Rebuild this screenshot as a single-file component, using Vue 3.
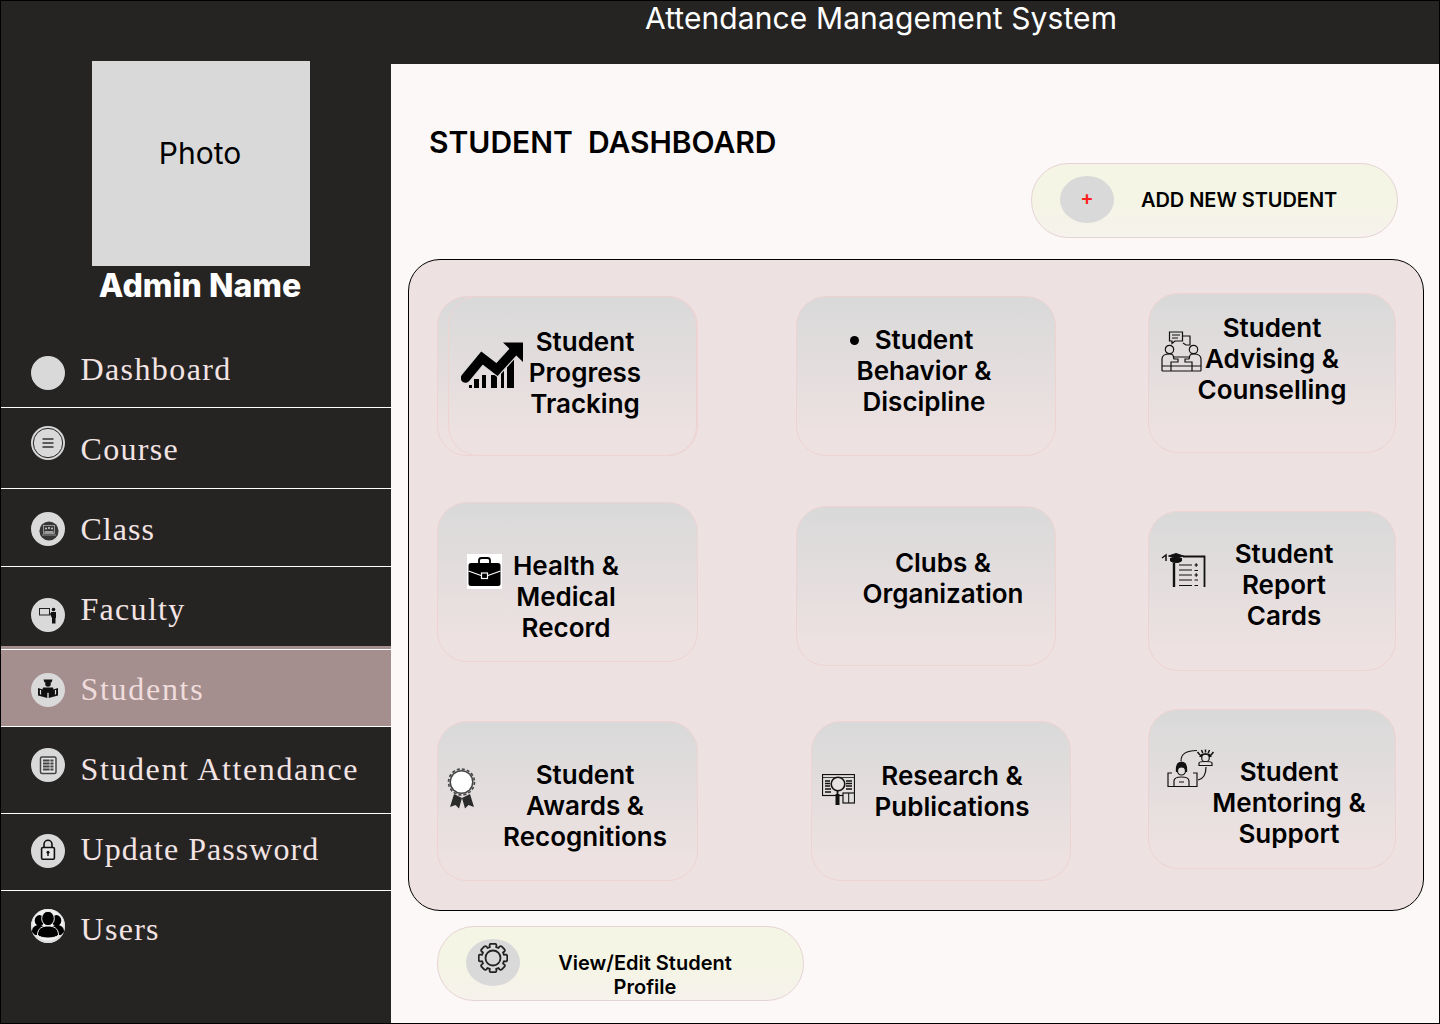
<script setup>
const navItems = [
  { key: 'dashboard', label: 'Dashboard' },
  { key: 'course', label: 'Course' },
  { key: 'class', label: 'Class' },
  { key: 'faculty', label: 'Faculty' },
  { key: 'students', label: 'Students' },
  { key: 'attendance', label: 'Student Attendance' },
  { key: 'password', label: 'Update Password' },
  { key: 'users', label: 'Users' }
]

const columns = [
  [
    { key: 'progress', lines: ['Student', 'Progress', 'Tracking'] },
    { key: 'health', lines: ['Health &', 'Medical', 'Record'] },
    { key: 'awards', lines: ['Student', 'Awards &', 'Recognitions'] }
  ],
  [
    { key: 'behavior', lines: ['Student', 'Behavior &', 'Discipline'] },
    { key: 'clubs', lines: ['Clubs &', 'Organization'] },
    { key: 'research', lines: ['Research &', 'Publications'] }
  ],
  [
    { key: 'advising', lines: ['Student', 'Advising &', 'Counselling'] },
    { key: 'report', lines: ['Student', 'Report', 'Cards'] },
    { key: 'mentoring', lines: ['Student', 'Mentoring &', 'Support'] }
  ]
]

const pageTitle = 'STUDENT  DASHBOARD'

// 8 teeth gear outline, centre 15,15
function makeGear() {
  let d = ''
  const teeth = 8
  for (let i = 0; i < teeth; i++) {
    const a = (i / teeth) * Math.PI * 2
    const step = Math.PI / teeth
    const pt = (r, ang) => `${(15 + r * Math.cos(ang)).toFixed(2)} ${(15 + r * Math.sin(ang)).toFixed(2)}`
    d += `${i === 0 ? 'M' : 'L'}${pt(11.4, a - step * 0.72)} `
    d += `C${pt(13.4, a - step * 0.72)} ${pt(14.4, a - step * 0.6)} ${pt(14.4, a - step * 0.36)} `
    d += `L${pt(14.4, a + step * 0.36)} `
    d += `C${pt(14.4, a + step * 0.6)} ${pt(13.4, a + step * 0.72)} ${pt(11.4, a + step * 0.72)} `
  }
  return d + 'Z'
}
const gearPath = makeGear()
</script>

<template>
  <div class="frame">
    <aside class="sidebar">
      <div class="photo">Photo</div>
      <div class="admin-name">Admin Name</div>
      <nav class="nav">
        <div v-for="item in navItems" :key="item.key" :class="['nav-row', 'nav-' + item.key]">
          <svg class="nav-icon" width="34" height="34" viewBox="0 0 34 34">
            <circle cx="17" cy="17" r="17" fill="#d9d9d9" />
            <template v-if="item.key === 'course'">
              <circle cx="17" cy="17" r="14.7" fill="none" stroke="#222" stroke-width="1" />
              <path d="M11.5 13H22.5M11.5 17H22.5M11.5 21H22.5" stroke="#333" stroke-width="1.300" />
            </template>
            <template v-if="item.key === 'class'">
              <circle cx="18" cy="19" r="9.6" fill="#363636" />
              <rect x="12.5" y="13.5" width="11" height="8" fill="none" stroke="#bbb" stroke-width="0.7" />
              <circle cx="15" cy="16.5" r="1" fill="#ccc" />
              <circle cx="18" cy="16" r="1" fill="#ccc" />
              <circle cx="21" cy="16.5" r="1" fill="#ccc" />
              <path d="M13.5 20H22.5" stroke="#ccc" stroke-width="1.4" />
              <path d="M11 23H25" stroke="#aaa" stroke-width="0.8" />
            </template>
            <template v-if="item.key === 'faculty'">
              <rect x="8.500" y="10.500" width="10" height="6.500" fill="#d9d9d9" stroke="#222" stroke-width="1" />
              <path d="M18 15L21 17" stroke="#222" stroke-width="1.200" />
              <circle cx="22.500" cy="11.500" r="1.800" fill="#111" />
              <path d="M20 14H25V20H24.500V25.500H21V20L19.500 17Z" fill="#111" />
            </template>
            <template v-if="item.key === 'students'">
              <path d="M12.500 6.500H21.500L20.500 9.500H13.500Z" fill="#111" />
              <circle cx="17" cy="11" r="2.800" fill="#111" />
              <path d="M12 14.500H22L23 18L17 20L11 18Z" fill="#111" />
              <path d="M7 15L16.300 18V25L7 22.500ZM27 15L17.700 18V25L27 22.500Z" fill="#111" />
              <path d="M9.500 17V21.500M24.500 17V21.500" stroke="#d9d9d9" stroke-width="1.200" />
            </template>
            <template v-if="item.key === 'attendance'">
              <rect x="9.500" y="9" width="15.500" height="16.500" rx="1.500" fill="#e2e2e2" stroke="#444" stroke-width="1.500" />
              <path d="M12 12.500H22.500M12 15.500H22.500M12 18.500H22.500M12 21.500H22.500" stroke="#444" stroke-width="1.900" />
              <path d="M19 11V23.500" stroke="#e2e2e2" stroke-width="0.800" />
            </template>
            <template v-if="item.key === 'password'">
              <path d="M13 14V10.500C13 8 14.800 6.300 17 6.300S21 8 21 10.500V14" fill="none" stroke="#111" stroke-width="1.600" />
              <rect x="10.600" y="13.500" width="12.800" height="11.700" rx="1.200" fill="#e6e6e6" stroke="#111" stroke-width="1.600" />
              <circle cx="17" cy="18.200" r="1.500" fill="#111" />
              <path d="M16.300 18.500H17.700V22H16.300Z" fill="#111" />
            </template>
            <template v-if="item.key === 'users'">
              <circle cx="17" cy="17" r="17" fill="#dedede" />
              <circle cx="17" cy="16" r="15.500" fill="#f2f2f2" />
              <ellipse cx="8.500" cy="11.500" rx="4.800" ry="5.400" fill="#000" />
              <ellipse cx="25.500" cy="11.500" rx="4.800" ry="5.400" fill="#000" />
              <path d="M1 23C1 18 4 16 8 16S15 18 15 23L12 26H4Z" fill="#000" />
              <path d="M33 23C33 18 30 16 26 16S19 18 19 23L22 26H30Z" fill="#000" />
              <ellipse cx="17" cy="9.500" rx="6.300" ry="7.200" fill="#000" stroke="#f2f2f2" stroke-width="1" />
              <path d="M6.500 26C6.500 19.500 11 17 17 17S27.500 19.500 27.500 26C24 30 10 30 6.500 26Z" fill="#000" stroke="#f2f2f2" stroke-width="1" />
            </template>
          </svg>
          <span class="nav-label">{{ item.label }}</span>
        </div>
      </nav>
    </aside>

    <div class="content">
      <header class="topbar">Attendance Management System</header>
      <main class="main">
        <h1 class="page-title">{{ pageTitle }}</h1>

        <div class="pill add-btn">
          <span class="pill-icon"><span class="plus">+</span></span>
          <span class="add-text">ADD NEW STUDENT</span>
        </div>

        <section class="panel">
          <div v-for="(col, i) in columns" :key="i" :class="['col', 'col-' + (i + 1)]">
            <div v-for="card in col" :key="card.key" :class="['card', 'card-' + card.key]">
              <span v-if="card.key === 'progress'" class="ghost"></span>

              <svg v-if="card.key === 'progress'" class="card-icon" width="62" height="47" viewBox="0 0 62 47">
                <path d="M8 43H11V46H8ZM13 37H18V46H13ZM21 33H25V46H21ZM30 33H36V46H30ZM40 25H43V46H40ZM46 18H53V46H46Z" fill="#000" />
                <path d="M4.500 36L21 16L36 27.500L52 10" fill="none" stroke="#dcdada" stroke-width="12" />
                <path d="M4.500 36L21 16L36 27.500L52 10" fill="none" stroke="#000" stroke-width="9.500" stroke-linecap="round" />
                <path d="M42 0.500H62V20Z" fill="#000" />
              </svg>

              <svg v-if="card.key === 'health'" class="card-icon" width="35" height="35" viewBox="0 0 35 35">
                <rect width="35" height="35" fill="#fff" />
                <path d="M12 9V6.500C12 5 13 4 14.500 4H20.500C22 4 23 5 23 6.500V9" fill="none" stroke="#000" stroke-width="1.800" />
                <rect x="1.500" y="9" width="32" height="23" rx="2.500" fill="#000" />
                <path d="M1.500 17L14 21.500M33.500 17L21 21.500" stroke="#fff" stroke-width="1.200" />
                <rect x="14.500" y="19" width="6" height="5.500" fill="#000" stroke="#fff" stroke-width="1.200" />
              </svg>

              <svg v-if="card.key === 'awards'" class="card-icon" width="30" height="41" viewBox="0 0 30 41">
                <path d="M7 26L3 39L8.500 37L12 40.500L15 30ZM23 26L27 39L21.500 37L18 40.500L15 30Z" fill="#2b2b2b" />
                <circle cx="14.500" cy="14" r="13" fill="none" stroke="#444" stroke-width="1.600" stroke-dasharray="3 2.100" />
                <circle cx="14.500" cy="14" r="12" fill="#444" />
                <circle cx="14.500" cy="14" r="10.500" fill="#fff" />
              </svg>

              <svg v-if="card.key === 'research'" class="card-icon" width="33" height="34" viewBox="0 0 33 34" fill="none" stroke="#111">
                <rect x="0.500" y="0.500" width="32" height="21" stroke-width="1.200" />
                <path d="M1 3.500H32" stroke-width="0.800" />
                <path d="M3 7H8M3 9.500H8M3 12H8M3 15H9M3 18H9M24 7H30M24 9.500H30M24 12H30M24 15H30" stroke-width="1.500" />
                <circle cx="16" cy="10" r="6.800" fill="#e6e2e2" stroke-width="1.600" />
                <path d="M15.500 17V20" stroke-width="1.800" />
                <path d="M15.500 20V31" stroke-width="4" />
                <rect x="21" y="19" width="11.500" height="10" fill="#e2dede" stroke-width="1.200" />
                <path d="M26.700 19V29" />
              </svg>

              <svg v-if="card.key === 'advising'" class="card-icon" width="41" height="41" viewBox="0 0 41 41" fill="none" stroke="#111" stroke-width="1.200">
                <path d="M21 5H29V14H25L22 12" />
                <path d="M8.500 1H21.500V10H14L11 12.500V10H8.500Z" fill="#ded9d9" />
                <path d="M11 4H19M11 7H17" />
                <circle cx="8.500" cy="18.500" r="4.200" />
                <circle cx="32.500" cy="18.500" r="4.200" />
                <path d="M1 40V28C1 24.500 4 23 8.500 23S12 25 13 28H17V31H10V40" />
                <path d="M40 40V28C40 24.500 37 23 32.500 23S29 25 28 28H24V31H31V40" />
                <path d="M12 26H29M1 35H40M1 40H40" />
              </svg>

              <svg v-if="card.key === 'report'" class="card-icon" width="45" height="36" viewBox="0 0 45 36" fill="none" stroke="#111">
                <path d="M1 5L5 2V8" stroke-width="1.500" />
                <path d="M7.500 3L15 0.500L22.500 3L15 5.500Z" fill="#111" />
                <path d="M9.500 5V8C12 10 18 10 20.500 8V5" fill="#111" />
                <path d="M22 3.500H43.500V34" stroke-width="1.800" />
                <path d="M13 10V34" stroke-width="2.400" />
                <path d="M18 12H31M18 17H31M18 22H31M18 27H31M18 32.500H31" stroke-width="1.200" />
                <path d="M33.500 12H37M35.200 10.300V13.700M33.500 17.500H37M33.500 22H37M35.200 20.300V23.700M33.500 27H37M33.500 32.500H37" stroke-width="1.200" />
              </svg>

              <svg v-if="card.key === 'mentoring'" class="card-icon" width="48" height="38" viewBox="0 0 48 38" fill="none" stroke="#111" stroke-width="1.200">
                <path d="M14 12C14 5 19 1.500 30 1.500M39 18C39 26 36 30 31 31" />
                <path d="M5 24H1V37.500H30V24H26" />
                <path d="M9.500 23C9 16 11 13 14.500 13S20 16 19.500 23" fill="#111" />
                <circle cx="14.500" cy="22" r="4" fill="#e3dfdf" />
                <path d="M7 37.500V32C7 29.500 10 28 14.500 28S22 29.500 22 32V37.500M12 33H17" />
                <path d="M30.500 3L33 6M46.500 3L44 6M34.500 1L35.800 4M42.500 1L41.200 4M38.500 0.500V3.500" stroke-width="1.500" />
                <path d="M33 7.500C33 4 44 4 44 7.500Z" fill="#111" />
                <circle cx="38.500" cy="9" r="3.800" fill="#e3dfdf" />
                <path d="M32 16.500V14C32 13 34.500 12.500 38.500 12.500S45 13 45 14V16.500Z" fill="#e3dfdf" />
              </svg>

              <div class="card-text">
                <div v-for="(line, n) in card.lines" :key="n">
                  <span v-if="card.key === 'behavior' && n === 0" class="bullet"></span>{{ line }}
                </div>
              </div>
            </div>
          </div>
        </section>

        <div class="pill view-btn">
          <span class="pill-icon">
            <svg class="gear" width="30" height="30" viewBox="0 0 30 30" fill="none" stroke="#222" stroke-width="1.800">
              <path :d="gearPath" stroke-linejoin="round" />
              <circle cx="15" cy="15" r="7.500" />
            </svg>
          </span>
          <span class="view-text">View/Edit Student<br />Profile</span>
        </div>
      </main>
    </div>
  </div>
</template>

<style scoped>
.frame {
  display: flex;
  width: 1440px;
  height: 1024px;
  box-sizing: border-box;
  border: 1px solid #000;
  background: #252423;
  font-family: Inter, "Liberation Sans", sans-serif;
  color: #000;
  overflow: hidden;
}

.sidebar {
  width: 390px;
  flex: none;
  padding-top: 60px;
}

.photo {
  display: flex;
  justify-content: center;
  width: 218px;
  height: 205px;
  margin-left: 91px;
  padding: 72px 2px 0 0;
  box-sizing: border-box;
  background: #d9d9d9;
  font-size: 30px;
  line-height: 40px;
  font-weight: 400;
}

.admin-name {
  height: 40px;
  padding-left: 8px;
  text-align: center;
  color: #fff;
  font-size: 32px;
  font-weight: 800;
  line-height: 40px;
}

.nav-row {
  display: flex;
  align-items: flex-start;
  box-sizing: border-box;
  padding-left: 30px;
  border-bottom: 1px solid #fff;
}

.nav-icon {
  flex: none;
}

.nav-label {
  margin-left: 16px;
  font-family: "Liberation Serif", serif;
  font-size: 32px;
  line-height: 38px;
  letter-spacing: 1.3px;
  color: #f3e3e3;
  white-space: nowrap;
}

.nav-dashboard { height: 102px; }
.nav-dashboard .nav-icon { margin-top: 50px; }
.nav-dashboard .nav-label { margin: 44px 0 0 15.5px; letter-spacing: 1.4px; }

.nav-course { height: 81px; }
.nav-course .nav-icon { margin-top: 18px; }
.nav-course .nav-label { margin: 22px 0 0 15.5px; }

.nav-class { height: 78px; }
.nav-class .nav-icon { margin-top: 23px; }
.nav-class .nav-label { margin: 21px 0 0 15.5px; letter-spacing: 1px; }

.nav-faculty { height: 79px; border-bottom: none; }
.nav-faculty .nav-icon { margin-top: 31px; }
.nav-faculty .nav-label { margin: 23px 0 0 15.5px; }

.nav-students {
  height: 81px;
  background: #a58e8e;
  box-shadow: inset 0 3px 0 #a58e8e, inset 0 4px 0 #fff;
}
.nav-students .nav-icon { margin-top: 27px; }
.nav-students .nav-label { margin: 24px 0 0 15.5px; color: #efdcdc; letter-spacing: 1.7px; }

.nav-attendance { height: 87px; }
.nav-attendance .nav-icon { margin-top: 21px; }
.nav-attendance .nav-label { margin: 23px 0 0 15.5px; letter-spacing: 1.6px; }

.nav-password { height: 77px; }
.nav-password .nav-icon { margin-top: 20px; }
.nav-password .nav-label { margin: 16px 0 0 15.5px; letter-spacing: 1.05px; }

.nav-users { border-bottom: none; }
.nav-users .nav-icon { margin-top: 18px; }
.nav-users .nav-label { margin: 19px 0 0 15.5px; }

.content {
  flex: 1;
  display: flex;
  flex-direction: column;
  min-width: 0;
}

.topbar {
  height: 63px;
  flex: none;
  box-sizing: border-box;
  padding-right: 68px;
  text-align: center;
  color: #fff;
  font-size: 30px;
  font-weight: 400;
  line-height: 34px;
  letter-spacing: 0.1px;
}

.main {
  flex: 1;
  display: flex;
  flex-direction: column;
  background: #fcf8f7;
}

.page-title {
  margin: 60px 0 0 38px;
  font-size: 30px;
  font-weight: 600;
  line-height: 36px;
  white-space: pre;
}

.pill {
  display: flex;
  box-sizing: border-box;
  width: 367px;
  height: 75px;
  flex: none;
  border: 1px solid #e6d4d4;
  border-radius: 37px;
  background: linear-gradient(180deg, #f4f5e4 0%, #f4f5e4 45%, #f6f2ec 100%);
}

.pill-icon {
  display: flex;
  align-items: center;
  justify-content: center;
  flex: none;
  width: 54px;
  height: 47px;
  margin: 12px 0 0 28px;
  border-radius: 50%;
  background: #d9d9d9;
}

.plus {
  margin-bottom: 4px;
  color: #ff1e1e;
  font-size: 20px;
  font-weight: 600;
  line-height: 20px;
}

.gear {
  margin-bottom: 10px;
}

.add-btn {
  margin: 3px 0 0 640px;
}

.add-text {
  margin: 22px 0 0 27px;
  font-size: 20px;
  font-weight: 600;
  line-height: 28px;
  letter-spacing: -0.06px;
  white-space: nowrap;
}

.view-btn {
  margin: 15px 0 0 46px;
}

.view-text {
  width: 200px;
  margin: 24px 0 0 25px;
  text-align: center;
  font-size: 20px;
  font-weight: 600;
  line-height: 24px;
}

.panel {
  display: flex;
  box-sizing: border-box;
  width: 1016px;
  height: 652px;
  flex: none;
  margin: 21px 0 0 17px;
  border: 1px solid #000;
  border-radius: 32px;
  background: #ede1e1;
}

.col {
  display: flex;
  flex-direction: column;
  align-items: flex-start;
  flex: none;
}

.col-1 { width: 261px; margin-left: 28px; padding-top: 36px; }
.col-2 { width: 276px; margin-left: 98px; padding-top: 36px; }
.col-3 { width: 248px; margin-left: 76px; padding-top: 33px; }

.card {
  position: relative;
  display: flex;
  align-items: flex-start;
  box-sizing: border-box;
  width: 261px;
  height: 160px;
  flex: none;
  border: 1px solid #efd3d3;
  border-radius: 30px;
  background: linear-gradient(180deg, #d9d9d9 0%, #ede1e1 85%);
}

.col-2 .card { width: 260px; }
.col-3 .card { width: 248px; }

.ghost {
  position: absolute;
  left: 10px;
  top: -1px;
  right: 0;
  bottom: -1px;
  border: 1px solid #efd3d3;
  border-radius: 30px;
}

.card-icon {
  position: relative;
  flex: none;
}

.card-text {
  position: relative;
  flex: none;
  width: 170px;
  text-align: center;
  font-size: 26px;
  font-weight: 600;
  line-height: 31px;
  white-space: nowrap;
}

.bullet {
  display: inline-block;
  width: 9px;
  height: 9px;
  margin: 0 16px 4px -25px;
  border-radius: 50%;
  background: #000;
}

.card-progress .card-icon { margin: 45px 0 0 23px; }
.card-progress .card-text { margin: 29px 0 0 -23px; }

.card-behavior .card-text { margin: 27px 0 0 42px; }

.card-advising .card-icon { margin: 37px 0 0 12px; }
.card-advising .card-text { margin: 18px 0 0 -15px; }

.card-health { margin-top: 46px; }
.card-health .card-icon { margin: 51px 0 0 29px; }
.card-health .card-text { margin: 47px 0 0 -21px; }

.card-clubs { margin-top: 50px; }
.card-clubs .card-text { margin: 40px 0 0 61px; }

.card-report { margin-top: 58px; }
.card-report .card-icon { margin: 41px 0 0 12px; }
.card-report .card-text { margin: 26px 0 0 -7px; }

.card-awards { margin-top: 59px; }
.card-awards .card-icon { margin: 46px 0 0 9px; }
.card-awards .card-text { margin: 37px 0 0 23px; }

.card-research { margin: 55px 0 0 15px; }
.card-research .card-icon { margin: 52px 0 0 10px; }
.card-research .card-text { margin: 38px 0 0 12px; }

.card-mentoring { margin-top: 38px; }
.card-mentoring .card-icon { margin: 39px 0 0 18px; }
.card-mentoring .card-text { margin: 46px 0 0 -11px; }
</style>
